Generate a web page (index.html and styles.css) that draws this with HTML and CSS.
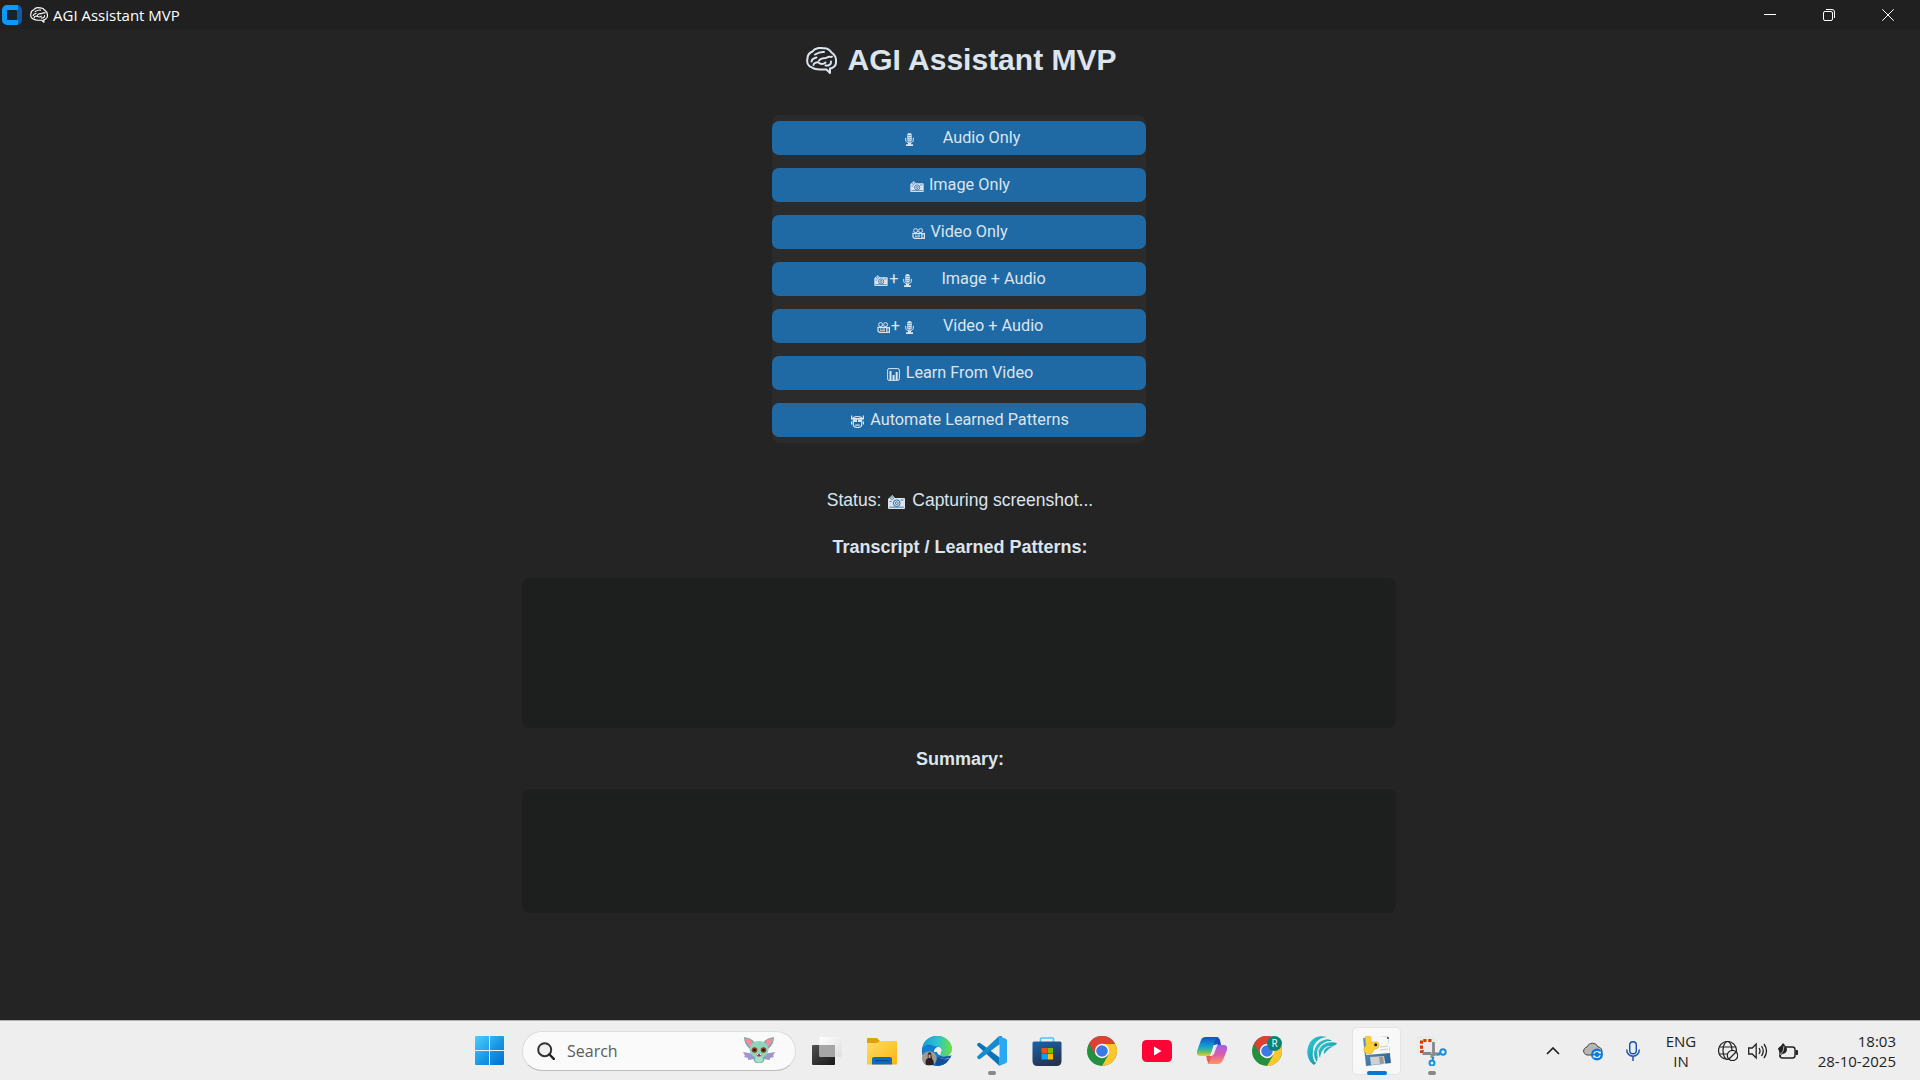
FILE: index.html
```html
<!DOCTYPE html>
<html lang="en">
<head>
<meta charset="utf-8">
<title>AGI Assistant MVP</title>
<link rel="stylesheet" href="styles.css">
</head>
<body>
<svg class="sprite" aria-hidden="true">
  <symbol id="brain" viewBox="0 0 31 27">
    <g fill="none" stroke="currentColor" stroke-width="2" stroke-linecap="round" stroke-linejoin="round">
      <path d="M6 20.500C2 19.500.500 15.500 1.500 11.500 1.500 8 4 5.500 6.500 4.500 9 1 14 .500 17 1.200c4-.400 7 1.800 8.500 4.300 3 2 4.800 5.500 4.500 9 .200 3-1.500 5.500-4 6.500l-2 .500v4.500l-3.500-3.500H14c-3.500 0-6-.500-8-2Z"/>
      <path d="M5.500 14.500C6 12 8 11 10.500 10.500M9 7.500c2.500-1.500 5-3 9-2.500M13 13.500c3-4 5-1 8-3s4 .500 5-1M7.500 18c0-2 3-3 5-2.500 2 2 5 2 7 0M19.500 18.500c3 .500 6-1 5.500-4"/>
    </g>
  </symbol>
  <symbol id="mic" viewBox="0 0 9 13">
    <path fill="currentColor" d="M4.500 0C6.200 0 6.800 1 6.800 2.200V7c0 1-.900 1.700-2.300 1.700S2.200 8 2.200 7V2.200C2.200 1 2.800 0 4.500 0ZM3 10h3v1.200h2V13H1v-1.800h2Z"/>
    <path fill="none" stroke="currentColor" d="M.700 4.800v2.400c0 1.400 1.500 2.600 3.800 2.600s3.800-1.200 3.800-2.600V4.800"/>
    <path class="cut" d="M2.500 2.500h4M2.500 4.600h4M2.500 6.700h4" stroke-width=".5"/>
  </symbol>
  <symbol id="camera" viewBox="0 0 17 14">
    <path fill="currentColor" d="M0 4 3 1.200 4.300 0 7 3h9.200c.500 0 .800.300.800.800V13c0 .600-.300 1-.900 1H.900C.300 14 0 13.600 0 13Z"/>
    <path class="cut" d="m2.300 3.200 1.800-1.700 1.700 1.700-1.700 1.500ZM1.300 12.200h14.500M1.500 6.500h2M12.500 5h3" stroke-width=".8"/>
    <circle class="cut" cx="8.700" cy="8.200" r="3.300" stroke-width="1"/>
    <circle class="cut" cx="8.700" cy="8.200" r="1.300" stroke-width=".9"/>
  </symbol>
  <symbol id="film" viewBox="0 0 13 11">
    <g fill="none" stroke="currentColor">
      <circle cx="3.600" cy="2.600" r="2"/><circle cx="8.600" cy="2.600" r="2"/>
      <path d="M1 5.300h8.800v5.200H2.500L1 9ZM9.800 6.200l2.600-.600v4.800l-2.600-.600" stroke-width="1.200"/>
      <path d="M3 7h1.500M5.500 7H8M3 8.800h5"/>
    </g>
  </symbol>
  <symbol id="chart" viewBox="0 0 13 13">
    <rect x=".6" y=".6" width="11.800" height="11.800" rx="1.500" fill="none" stroke="currentColor"/>
    <path fill="currentColor" d="M2.500 3h2v9h-2ZM5.600 7h2v5h-2ZM8.700 4h2v8h-2Z"/>
  </symbol>
  <symbol id="robot" viewBox="0 0 13 13">
    <path fill="none" stroke="currentColor" stroke-width="1.200" d="M2.300 4v5.500c0 2 1.200 3 4.200 3s4.200-1 4.200-3V4ZM.600.500v4M12.400.500v4M.600 6.500v3M12.400 6.500v3M2 3.500C3 .800 10 .800 11 3.500"/>
    <path fill="currentColor" d="M3 4.500h3v2.600H3ZM7 4.500h3v2.600H7ZM4.200 9.500h4.600v1.200H4.200ZM1 3h11v1.200H1Z"/>
  </symbol>
  <symbol id="chrome" viewBox="0 0 30 30">
    <circle cx="15" cy="15" r="15" fill="#23903f"/>
    <path fill="#de4034" d="M2 7.500A15 15 0 0 1 28 7.500L15 8.500 8.500 18.750Z"/>
    <path fill="#fcc62c" d="M15 8h13.300A15 15 0 0 1 15 30l6.500-11.250Z"/>
    <circle cx="15" cy="15" r="7.200" fill="#fff"/><circle cx="15" cy="15" r="5.800" fill="#3b78ea"/>
  </symbol>
</svg>

<header class="titlebar">
  <svg class="app-logo" viewBox="0 0 20 20"><path fill="#0a5ca8" d="M10 0h5a5 5 0 0 1 5 5v10a5 5 0 0 1-5 5H9Z"/><path fill="#0d99f8" d="M5 0h11v5H6.500C5.500 5 5 5.500 5 6.500v7c0 1 .500 1.500 1.500 1.500H16v4.500a5 5 0 0 1-1 .500H5a5 5 0 0 1-5-5V5a5 5 0 0 1 5-5Z"/><rect x="5" y="5" width="10" height="10" rx="1.500" fill="#202020"/></svg>
  <svg class="title-brain"><use href="#brain"/></svg>
  <span class="title-text">AGI Assistant MVP</span>
  <div class="window-controls">
    <svg viewBox="0 0 12 12"><path d="M0 5.500h12"/></svg>
    <svg viewBox="0 0 12 12"><rect x=".5" y="2.500" width="9" height="9" rx="1.500"/><path d="M3 .500h6A2.500 2.500 0 0 1 11.500 3v6"/></svg>
    <svg viewBox="0 0 12 12"><path d="m.300.300 11.400 11.400M11.700.300.300 11.700"/></svg>
  </div>
</header>

<main class="app">
  <h1 class="heading"><svg class="heading-brain"><use href="#brain"/></svg><span>AGI Assistant MVP</span></h1>
  <div class="actions">
    <button class="action"><svg class="mic"><use href="#mic"/></svg>Audio Only</button>
    <button class="action"><svg class="camera"><use href="#camera"/></svg>Image Only</button>
    <button class="action"><svg class="film"><use href="#film"/></svg>Video Only</button>
    <button class="action"><svg class="camera tight"><use href="#camera"/></svg>+<svg class="mic"><use href="#mic"/></svg>Image + Audio</button>
    <button class="action"><svg class="film tight"><use href="#film"/></svg>+<svg class="mic"><use href="#mic"/></svg>Video + Audio</button>
    <button class="action"><svg class="square"><use href="#chart"/></svg>Learn From Video</button>
    <button class="action"><svg class="square"><use href="#robot"/></svg>Automate Learned Patterns</button>
  </div>
  <p class="status"><span>Status:</span><svg class="status-camera"><use href="#camera"/></svg><span>Capturing screenshot...</span></p>
  <h2 class="label transcript-label">Transcript / Learned Patterns:</h2>
  <div class="textbox transcript"></div>
  <h2 class="label summary-label">Summary:</h2>
  <div class="textbox summary"></div>
</main>

<footer class="taskbar">
  <svg class="start" viewBox="0 0 29 29">
    <defs><linearGradient id="win" x1="0" y1="0" x2="29" y2="29" gradientUnits="userSpaceOnUse"><stop stop-color="#4fd0ff"/><stop offset=".55" stop-color="#1697e3"/><stop offset="1" stop-color="#0070cf"/></linearGradient></defs>
    <path fill="url(#win)" d="M1 0h13v14H0V1Q0 0 1 0ZM15 0h13q1 0 1 1v13H15ZM0 15h14v14H1q-1 0-1-1ZM15 15h14v13q0 1-1 1H15Z"/>
  </svg>
  <div class="search">
    <svg class="magnifier" viewBox="0 0 18 18"><circle cx="7.700" cy="7.700" r="6.500" fill="#f0f0f0" stroke="#333" stroke-width="2"/><path d="m12.500 12.500 4.300 4.300" stroke="#222" stroke-width="2.400" stroke-linecap="round"/></svg>
    <span>Search</span>
    <svg class="bat" viewBox="0 0 32 27">
      <path fill="#a294cd" d="m11 17-11-2 2 4-1 1 4 1 0 2 7-1ZM21 17l11-2-2 4 1 1-4 1v2l-7-1Z"/>
      <path fill="#6fae9f" d="M1 0c6 1 10 3 11 7l-5 5C3 9 1 5 1 0ZM31 0c-6 1-10 3-11 7l5 5c4-3 6-7 6-12Z"/>
      <path fill="#f58ba0" d="M2 1c5 1 8 3 8 6l-3 3C4 7 2 4 2 1ZM30 1c-5 1-8 3-8 6l3 3c3-3 5-6 5-9Z"/>
      <path fill="#6bb3a2" d="M10 18h12l-1 6-2 2h-6l-2-2Z"/>
      <ellipse cx="16" cy="12.500" rx="9.500" ry="8.500" fill="#8fd3bd"/>
      <ellipse cx="16" cy="22" rx="4" ry="3.500" fill="#a9dfca"/>
      <circle cx="11.500" cy="13" r="2.800" fill="#87461e"/><circle cx="20.500" cy="13" r="2.800" fill="#87461e"/>
      <circle cx="11.500" cy="13" r="1.300" fill="#21110d"/><circle cx="20.500" cy="13" r="1.300" fill="#21110d"/>
      <path fill="#b52d38" d="M13.500 17h5l-1 2.500h-3Z"/><path d="M14 17h1v1h-1Zm3 0h1v1h-1Z" fill="#fff"/>
    </svg>
  </div>

  <nav class="apps">
    <div class="slot"><svg viewBox="0 0 30 30">
      <defs><linearGradient id="tv" x2="1" y2="1"><stop stop-color="#505050"/><stop offset="1" stop-color="#181818"/></linearGradient><linearGradient id="tvw" x2="1" y2="1"><stop stop-color="#fff"/><stop offset="1" stop-color="#dedede"/></linearGradient></defs>
      <rect y="9" width="23" height="20" rx="1" fill="url(#tv)"/><rect x="7.500" y="1" width="22" height="20" rx="1" fill="url(#tvw)"/><path fill="#a6a6a6" d="M7.500 9H23v12H8.500q-1 0-1-1Z"/></svg></div>
    <div class="slot"><svg viewBox="0 0 30 30">
      <defs><linearGradient id="fold" x2="1" y2="1"><stop stop-color="#ffdc67"/><stop offset="1" stop-color="#fab70e"/></linearGradient></defs>
      <path fill="#dda10d" d="M0 3q0-1 1-1h9l3 3h16v5H0Z"/><path fill="url(#fold)" d="M0 7h10l3-2h16q1 0 1 1v22q0 .500-1 .500H0Z"/><path fill="#0f6cbd" d="M5 23q0-2 2-2h16q2 0 2 2v5.500H5Z"/><path fill="#0a4c8b" d="M8 24h14v1.200H8Z"/></svg></div>
    <div class="slot"><svg viewBox="0 0 30 30">
      <defs><linearGradient id="edge" x1="0" y1="10" x2="30" y2="12" gradientUnits="userSpaceOnUse"><stop stop-color="#159bd7"/><stop offset=".5" stop-color="#2cc3d0"/><stop offset="1" stop-color="#6fe03b"/></linearGradient></defs>
      <circle cx="15" cy="15" r="15" fill="#0c59a4"/>
      <path fill="#0f7ed6" d="M1 10h17v8c-3 4 2 8 8 7-4 5-12 6-18 3C2 25-1 18 1 10Z"/>
      <path fill="#eee" d="M12 16c0-3 2-5 5-5s4 3 2 6c-1 2 3 4 8 3l3-1v-7l-4 8c-7 1-10-1-11-4Z"/>
      <path fill="url(#edge)" d="M.500 11C2 4 8 0 15 0c9 0 15 6 15 13 0 5-4 7.500-8 7.500-4 0-5-1-3-3 2-3 0-7-4-7-5 0-6-3-14.500.500Z"/>
      <path fill="#eee" d="M16 20c3 4 9 3 12 2l1 1-2 3c-5 0-10-2-11-6Z"/>
      <path fill="#104f98" d="M16 20c3 4 9 4 12 2-3 6-10 9-15 7Z"/>
      <circle cx="7.300" cy="22.500" r="7.300" fill="#a39a8b"/><path fill="#292124" d="M4 29c-1-4 0-6 2-7-1-5 1-7 3-5l1 6c2 1 2 4 1.500 6Z"/><path fill="#cda694" d="M6.500 18.500h2V22h-2Z"/></svg></div>
    <div class="slot running"><svg viewBox="0 0 30 30">
      <path fill="#0a73b7" d="M3 7c-1.300-.800-3.800 1-2.500 2.700L22 29.500l3-7Z"/><path fill="#168bd0" d="M3 23c-1.300.800-3.800-1-2.500-2.700L21 1q2-2 4-1l-2 8Z"/><path fill="#28a9f2" d="m22 0 6.700 2.700Q30 3.300 30 5v20q0 1.700-1.300 2.300L22 30Z"/><path fill="#eee" d="M22.500 8.500v13L14 15Z"/></svg></div>
    <div class="slot"><svg viewBox="0 0 30 30">
      <defs><linearGradient id="store" x2=".4" y2="1"><stop stop-color="#1765b0"/><stop offset="1" stop-color="#263452"/></linearGradient></defs>
      <path d="M8.500 7V3q0-1 1-1h11q1 0 1 1v4" fill="none" stroke="#45c8f5" stroke-width="1.600"/><path fill="url(#store)" d="M.500 7q0-1.500 1.500-1.500h26q1.500 0 1.500 1.500v18q0 5-5 5h-19q-5 0-5-5Z"/><path fill="#f04f26" d="M9.500 12H15v5.500H9.500Z"/><path fill="#7fb900" d="M15.500 12H21v5.500h-5.500Z"/><path fill="#05a5ef" d="M9.500 18H15v5.500H9.500Z"/><path fill="#ffb901" d="M15.500 18H21v5.500h-5.500Z"/></svg></div>
    <div class="slot"><svg><use href="#chrome"/></svg></div>
    <div class="slot"><svg viewBox="0 0 30 30"><rect y="4" width="30" height="22" rx="4.500" fill="#ff0436"/><path fill="#fff" d="m12 10.500 7.500 4.500-7.500 4.500Z"/></svg></div>
    <div class="slot"><svg viewBox="0 0 30 30">
      <defs><linearGradient id="cp1" x2="0" y2="1"><stop stop-color="#1350c5"/><stop offset=".5" stop-color="#159fd5"/><stop offset=".75" stop-color="#55bd75"/><stop offset="1" stop-color="#e9cf29"/></linearGradient><linearGradient id="cp2" x2="0" y2="1"><stop stop-color="#9b62ea"/><stop offset=".5" stop-color="#dd5ca8"/><stop offset="1" stop-color="#ff9858"/></linearGradient></defs>
      <path fill="#174fbd" d="M16 1h4q2 0 3 3l1 5h-9Z"/>
      <path fill="#ee5a51" d="m15 20-6-1 1 5q1 4 4 4h4Z"/>
      <path fill="url(#cp1)" d="M9 1h12q-2 0-3 4l-4 13q-1 2-3 2H3q-4 0-3-5L4 4q1-3 5-3Z"/>
      <path fill="url(#cp2)" d="M20 9h7q4 0 3 5l-4 10q-2 4-5 4H9q3 0 4-4l4-12q1-3 3-3Z"/><path fill="#fff" opacity=".8" d="M17 10q1-2 4-2l-1 2-3 8q-1 2-4 2l1-2Z"/></svg></div>
    <div class="slot"><svg><use href="#chrome"/></svg><span class="profile">R</span></div>
    <div class="slot"><svg viewBox="0 0 30 30">
      <defs><linearGradient id="swirl" x2="1" y2="1"><stop stop-color="#35d2d8"/><stop offset="1" stop-color="#087c96"/></linearGradient></defs>
      <g fill="url(#swirl)"><path d="M7 29C-1 24-2 11 5 4 10-1 16 0 20 1 10 2 5 9 6 17q0 6 3 10Z"/><path d="M10 26C4 18 8 6 17 4q5-2 8 1c-8-1-14 5-14 13Z"/><path d="M13 22C9 13 16 6 24 6l6 1c-1 3-5 3-8 3-6 1-8 6-9 12Z"/><path d="M17 18c-1-5 3-8 10-8-5 2-7 5-10 8Z"/></g><path fill="none" stroke="#eee" d="M8 26C3 16 9 5 18 3M12 22C7 13 16 5 24 6"/></svg></div>
    <div class="slot active"><svg viewBox="0 0 30 30">
      <defs><linearGradient id="disk" x2="1" y2="1"><stop stop-color="#639bc3"/><stop offset="1" stop-color="#285f91"/></linearGradient></defs>
      <path fill="url(#disk)" d="M1 2 26 .500 29 27 4 30Z"/><path fill="#f7f7f6" d="m6 1 20-.500L28 17 4 19Z"/><path fill="#3c3c3c" d="m25 1 1.500 0 .3 2-1.500 0Z"/><path stroke="#ccc" d="m18 11 8-1M18 14l8-1"/><path fill="#d0d0d0" d="m8 21 14-1 1.500 8L9 29Z"/><path fill="#999" d="m17 21 4-.500 1 7-4 .500Z"/>
      <path fill="#fbcf38" stroke="#d8a51a" stroke-width=".5" d="M3 1q3-2 6 0v5h4q4-1 4 3t-4 4l-2 2q0 3-5 3-5-1-4-6l2-3Z"/><circle cx="13.700" cy="8.700" r="1.500" fill="#222"/></svg></div>
    <div class="slot running"><svg viewBox="0 0 30 30">
      <rect width="18" height="20" rx="2" fill="#e7ebed"/><path fill="none" stroke="#d83b01" stroke-width="3" stroke-dasharray="3.200 1.800" d="M14.500 4.500h-10v11h4"/><path fill="none" stroke="#85898c" stroke-width="2.800" d="M16.500 6v12H23M5.500 17.500h9M15 18v4"/><path fill="none" stroke="#8c9093" stroke-width="2" d="m14 21 6-4"/><g fill="none" stroke="#1490df" stroke-width="2"><circle cx="26" cy="16" r="2.700"/><circle cx="15" cy="27" r="2.500"/><path d="m20 19 3.500-2M15.500 24l1-3"/></g></svg></div>
  </nav>

  <div class="tray">
    <svg class="chevron" viewBox="0 0 14 8"><path d="m1 7 6-6 6 6" fill="none" stroke="#222" stroke-width="1.700"/></svg>
    <svg class="cloud" viewBox="0 0 20 20"><path d="M4 14C-.500 13-.500 7 4 6c2-5 9-5 11 0 4 0 5 5 3 8Z" fill="#b7b7b7" stroke="#444"/><circle cx="14" cy="13.500" r="6" fill="#0c7bdc"/><path d="M10.800 12.800c1-3 5-3 6.400-.300v-2M17.200 14.200c-1 3-5 3-6.400.300v2" fill="none" stroke="#fff" stroke-width="1.200"/></svg>
    <svg class="tray-mic" viewBox="0 0 14 20"><rect x="3.700" y=".7" width="6.600" height="12" rx="3.300" fill="#e5edf9" stroke="#174fa5" stroke-width="1.400"/><path d="M.700 8.500c0 9 12.600 9 12.600 0M7 15.500V20" fill="none" stroke="#174fa5" stroke-width="1.400"/></svg>
    <div class="language"><span>ENG</span><span>IN</span></div>
    <svg class="globe" viewBox="0 0 20 20"><g fill="none" stroke="#222" stroke-width="1.200"><circle cx="9.500" cy="9.500" r="9"/><ellipse cx="9.500" cy="9.500" rx="4.500" ry="9"/><path d="M1.500 6h16M1.500 13h16"/><circle cx="14.500" cy="14.500" r="5.200" fill="#eee"/><path d="m11 18 7-7"/></g></svg>
    <svg class="speaker" viewBox="0 0 20 18"><g fill="none" stroke="#222" stroke-width="1.300"><path d="M.700 6h3.500l4-4v14l-4-4H.700ZM11 6q2 3 0 6M13.500 4q3.500 5 0 10M16 2q5 7 0 14"/></g></svg>
    <svg class="battery" viewBox="0 0 20 16"><rect x="2" y="4" width="15" height="11" rx="2.500" fill="none" stroke="#222" stroke-width="1.400"/><path fill="#222" d="M17.500 7H19q1 0 1 1v3q0 1-1 1h-1.500ZM0 5q3-1 5-5 4 4 4 7-1 4-5 4l-2 3-1-1 2-3Q0 8 0 5Z"/><path d="M2 12Q6 9 6 3" fill="none" stroke="#eee" stroke-width=".7"/></svg>
    <div class="clock"><span>18:03</span><span>28-10-2025</span></div>
  </div>
</footer>
</body>
</html>
```

FILE: styles.css
```css
* { box-sizing: border-box; }

body {
  margin: 0;
  width: 1920px;
  height: 1080px;
  overflow: hidden;
  display: flex;
  flex-direction: column;
  background: #242424;
  color: #dce4ee;
  font-family: "Liberation Sans", Arial, sans-serif;
}

svg { display: block; flex: none; }
.sprite { display: none; }

.titlebar {
  flex: none;
  height: 29px;
  display: flex;
  align-items: center;
  padding-left: 2px;
  background: #202020;
  color: #fff;
  font: 15px/28px "Open Sans", "Noto Sans", sans-serif;
}
.app-logo { width: 20px; height: 20px; }
.title-brain { width: 18px; height: 16px; margin: 0 5px 0 8px; }
.title-text { white-space: nowrap; }
.window-controls {
  display: flex;
  gap: 47px;
  margin: 0 26px 0 auto;
}
.window-controls svg {
  width: 12px;
  height: 12px;
  fill: none;
  stroke: #fff;
}

.app {
  flex: 1;
  display: flex;
  flex-direction: column;
  align-items: center;
}
.heading {
  display: flex;
  align-items: center;
  gap: 11px;
  height: 34px;
  margin: 14px 0 38px 2px;
  font-size: 30px;
  line-height: 34px;
  white-space: nowrap;
}
.heading-brain { width: 31px; height: 27px; }

.actions {
  width: 374px;
  display: flex;
  flex-direction: column;
  gap: 13px;
  padding: 6px 0;
  margin-right: 2px;
  border-radius: 8px;
  background: #2b2b2b;
}
.action {
  height: 34px;
  display: flex;
  align-items: center;
  justify-content: center;
  padding: 0 0 1px 2px;
  border: 0;
  border-radius: 7px;
  background: #1f6aa5;
  color: #dce4ee;
  font: 16.25px/20px Roboto, sans-serif;
  white-space: nowrap;
}
.action svg { position: relative; top: 2px; }
.cut { fill: none; stroke: #1f6aa5; }
.mic { width: 9px; height: 13px; margin: 0 29px 0 5px; }
.camera { width: 14px; height: 11px; margin-right: 5px; }
.film { width: 13px; height: 11px; margin-right: 5px; }
.square { width: 13px; height: 13px; margin-right: 6px; }
.camera.tight, .film.tight { margin-right: 1px; }

.status {
  display: flex;
  align-items: center;
  height: 20px;
  margin: 47px 0 0 0;
  font-size: 17.5px;
  line-height: 20px;
  white-space: nowrap;
}
.status-camera { width: 17px; height: 14px; margin: 3px 7px 0 7px; }

.label {
  margin: 0;
  font-size: 18px;
  line-height: 20px;
  white-space: nowrap;
}
.transcript-label { margin-top: 27px; }
.summary-label { margin-top: 21px; }
.textbox {
  width: 874px;
  margin-right: 2px;
  border-radius: 8px;
  background: #1d1e1e;
}
.transcript { height: 150px; margin-top: 21px; }
.summary { height: 124px; margin-top: 20px; }

.taskbar {
  flex: none;
  height: 60px;
  display: flex;
  align-items: center;
  padding-left: 475px;
  border-top: 1px solid #b5b1b1;
  background: #eee;
  color: #222;
  font: 15px/20px "Open Sans", "Noto Sans", sans-serif;
}
.start { width: 29px; height: 29px; }
.search {
  width: 274px;
  height: 40px;
  display: flex;
  align-items: center;
  margin: 0 3px 0 18px;
  padding: 0 20px 0 14px;
  border: 1px solid #dcdcdc;
  border-bottom-color: #bdbdbd;
  border-radius: 20px;
  background: #fafafa;
  color: #5c5c5c;
  font-size: 16px;
}
.magnifier { width: 18px; height: 18px; margin-right: 12px; }
.bat { width: 32px; height: 27px; margin-left: auto; }

.apps { display: flex; }
.slot {
  position: relative;
  width: 55px;
  height: 48px;
  display: flex;
  align-items: center;
  justify-content: center;
}
.slot svg { width: 30px; height: 30px; }
.running::after, .active::after {
  content: "";
  position: absolute;
  bottom: 0;
  width: 8px;
  height: 4px;
  border-radius: 2px;
  background: #888;
}
.active::after { width: 20px; background: #0078d7; }
.active::before {
  content: "";
  position: absolute;
  inset: 0 3px;
  border: 1px solid #e4e4e4;
  border-radius: 5px;
  background: #f8f8f8;
}
.active svg { position: relative; }
.profile {
  position: absolute;
  left: 28px;
  top: 9px;
  width: 15px;
  height: 15px;
  border-radius: 50%;
  background: #0b8274;
  color: #fff;
  font-size: 10px;
  line-height: 15px;
  text-align: center;
}

.tray {
  flex: 1;
  display: flex;
  align-items: center;
  padding-right: 24px;
}
.chevron { width: 14px; height: 8px; margin-left: 87px; }
.cloud { width: 20px; height: 20px; margin-left: 23px; }
.tray-mic { width: 14px; height: 20px; margin-left: 23px; }
.language, .clock { display: flex; flex-direction: column; }
.language { width: 30px; margin-left: 26px; align-items: center; }
.globe { width: 20px; height: 20px; margin-left: 22px; }
.speaker { width: 20px; height: 18px; margin-left: 10px; }
.battery { width: 20px; height: 16px; margin-left: 10px; }
.clock { margin-left: auto; align-items: flex-end; white-space: nowrap; }
```
